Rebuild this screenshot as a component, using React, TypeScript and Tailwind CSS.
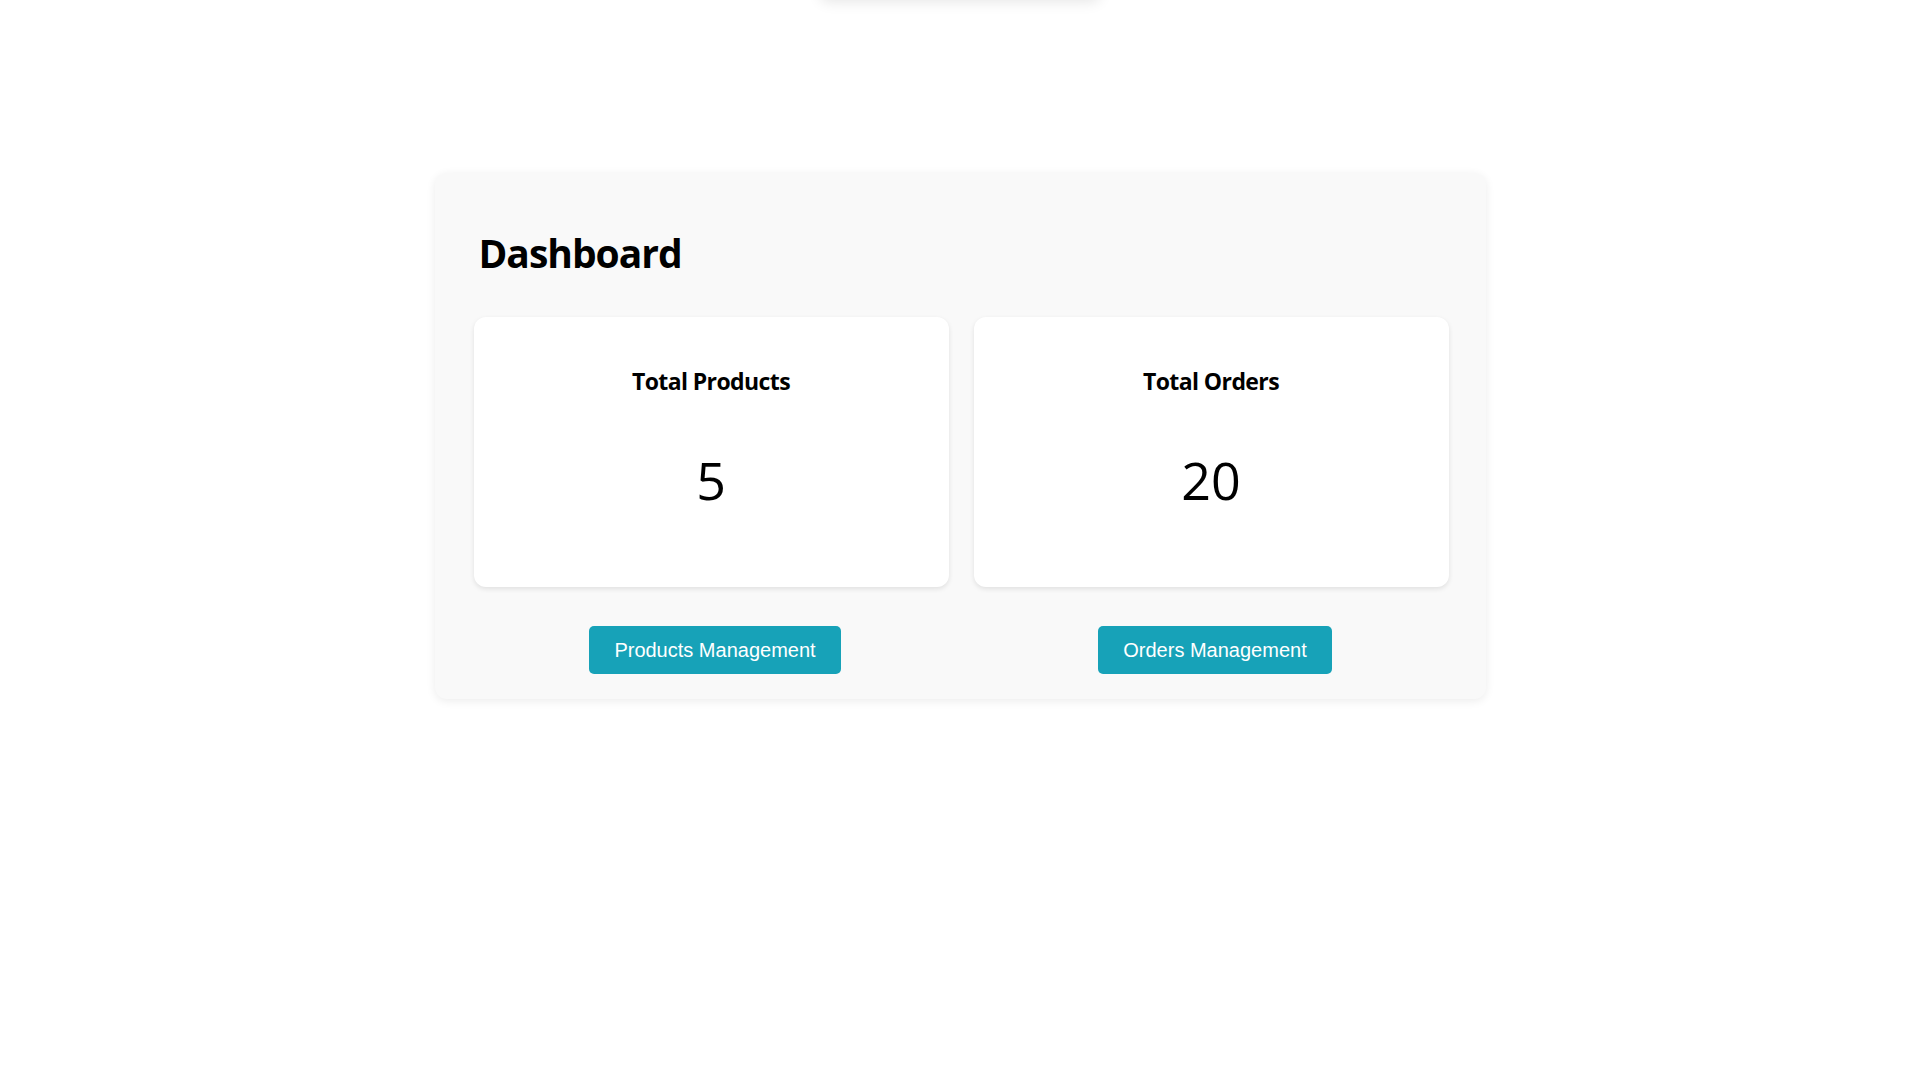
const stats = [
  { title: "Total Products", value: 5 },
  { title: "Total Orders", value: 20 },
];

const links = ["Products Management", "Orders Management"];

export default function App() {
  return (
    <div className="min-h-screen w-full overflow-hidden bg-white" style={{ fontFamily: '"Open Sans", "Noto Sans", sans-serif' }}>
      <div className="mx-auto -mt-10 h-10 w-[280px] rounded-lg bg-white shadow-[0_2px_14px_rgba(0,0,0,0.10)]" />

      <main className="mx-auto mt-[173px] w-[1051px] rounded-xl bg-[#f9f9f9] pb-[25px] pl-[39px] pr-[37px] pt-[56px] shadow-[0_2px_10px_rgba(0,0,0,0.08)]">
        <h1 className="mb-[40px] pl-[5px] text-[39px] font-bold leading-[48px] tracking-[-1px] text-black">Dashboard</h1>

        <div className="grid grid-cols-2 gap-[25px]">
          {stats.map((s) => (
            <div
              key={s.title}
              className="flex h-[270px] flex-col items-center rounded-xl bg-white pt-[48px] shadow-[0_2px_5px_rgba(0,0,0,0.10)]"
            >
              <h2 className="text-[23px] font-bold leading-[32px] tracking-[-0.6px] text-black">{s.title}</h2>
              <p className="mt-[53px] text-[52px] font-normal leading-[60px] text-black">{s.value}</p>
            </div>
          ))}
        </div>

        <div className="mt-[39px] grid grid-cols-2 gap-[25px]">
          {links.map((label) => (
            <div key={label} className="flex justify-center pl-2">
              <button
                className="flex h-[48px] items-center rounded-[5px] bg-[#17a2b8] px-[25px] text-[20px] text-white"
                style={{ fontFamily: '"Liberation Sans", Arial, sans-serif' }}
              >
                {label}
              </button>
            </div>
          ))}
        </div>
      </main>
    </div>
  );
}
